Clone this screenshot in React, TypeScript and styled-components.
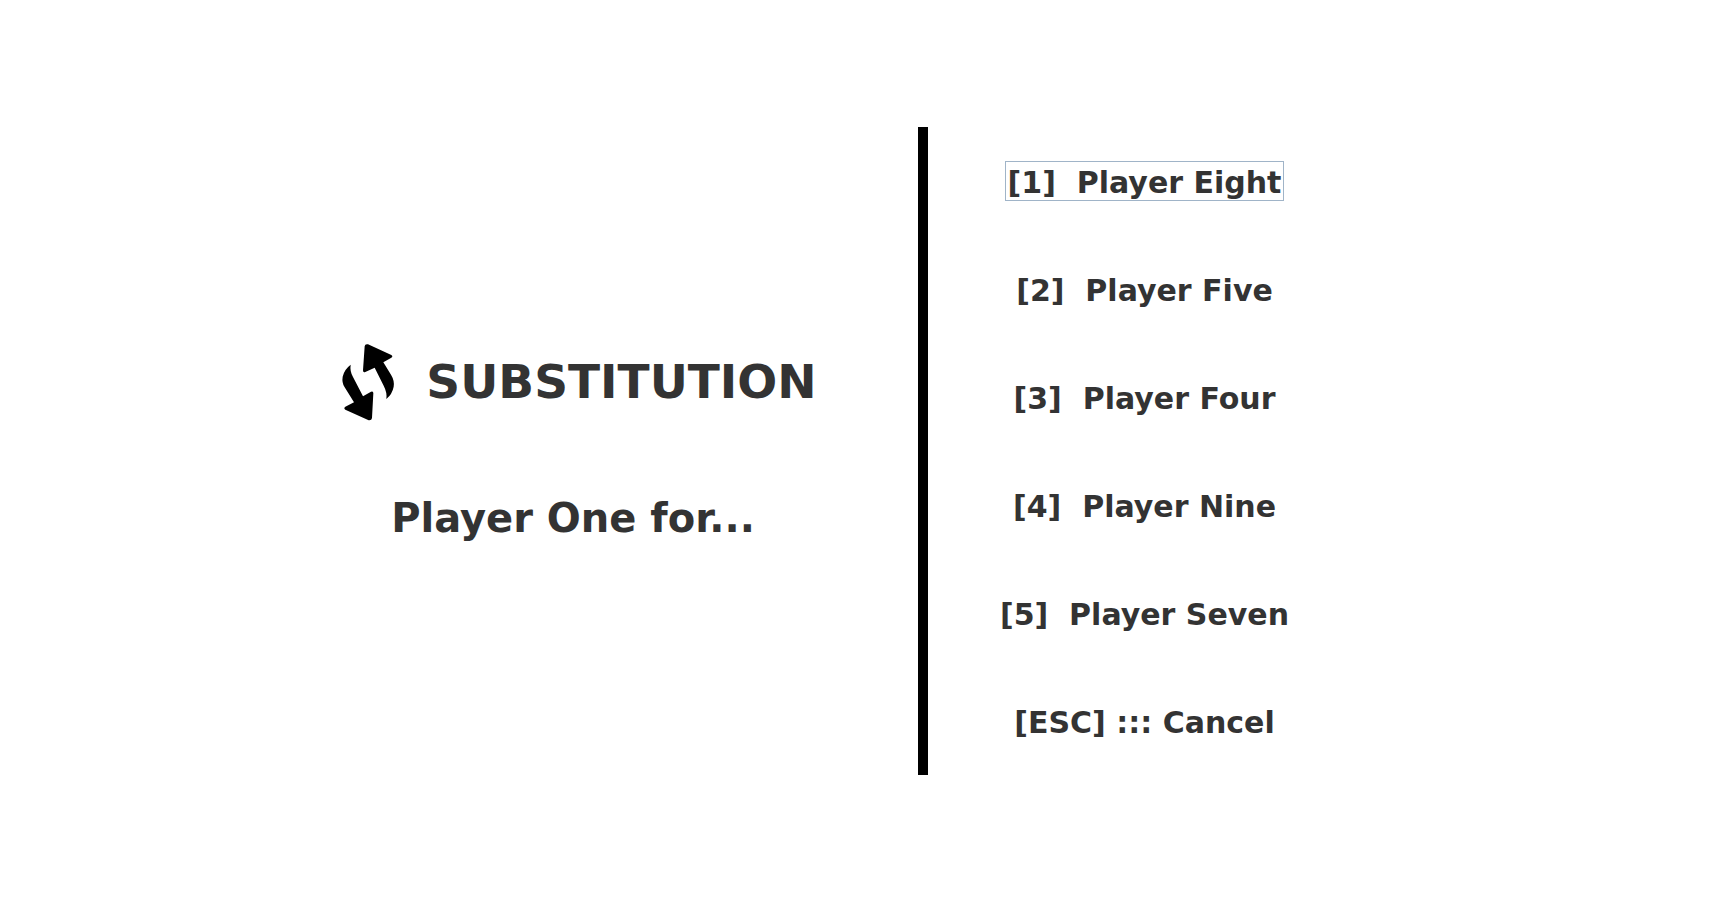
import React from "react";
import styled, { createGlobalStyle } from "styled-components";

const GlobalStyle = createGlobalStyle`
  * { box-sizing: border-box; }
  body {
    margin: 0;
    background: #fff;
    color: #333;
    font-family: Verdana, "DejaVu Sans", sans-serif;
    font-weight: bold;
  }
`;

const Screen = styled.main`
  min-height: 100vh;
  display: grid;
  grid-template-columns: 690fr 10px 433fr;
  align-content: center;
  padding: 0 367px 7px 228px;
`;

const Summary = styled.section`
  display: flex;
  flex-direction: column;
  align-items: center;
  justify-content: center;
  gap: 73px;
  padding-bottom: 18px;
`;

const TitleRow = styled.div`
  display: flex;
  align-items: center;
  gap: 31px;
  padding-left: 12px;
`;

const Title = styled.h1`
  margin: 0;
  font-size: 47px;
  line-height: 56px;
`;

const Subtitle = styled.h2`
  margin: 0;
  font-size: 40px;
  line-height: 48px;
`;

const SwapIcon = styled.svg`
  width: 54px;
  height: 78px;
  flex: none;
`;

const Divider = styled.div`
  background: #000;
`;

const Options = styled.ul`
  list-style: none;
  margin: 0;
  padding: 0;
`;

const OptionRow = styled.li`
  height: 108px;
  display: flex;
  align-items: center;
  justify-content: center;
`;

const Option = styled.button<{ $selected?: boolean }>`
  height: 40px;
  padding: 3px 2px 0;
  border: 1px solid ${(p) => (p.$selected ? "#a0b4c8" : "transparent")};
  background: none;
  color: inherit;
  font: inherit;
  font-size: 30px;
  line-height: 36px;
  white-space: pre;
  cursor: pointer;
`;

const options = [
  "[1]  Player Eight",
  "[2]  Player Five",
  "[3]  Player Four",
  "[4]  Player Nine",
  "[5]  Player Seven",
  "[ESC] ::: Cancel",
];

export default function App() {
  return (
    <>
      <GlobalStyle />
      <Screen>
        <Summary>
          <TitleRow>
            <SwapIcon viewBox="36 38 162 234" aria-hidden="true">
              <path d="M107 48Q108 40 117 42L187 74Q193 78 187 82L163 96L186 133Q197 151 194 169Q190 191 172 206Q175 187 164 166L137 112L109 125Q102 128 102 120Z" />
              <path d="M65 103Q62 122 72 140L102 198L126 184Q133 181 133 189L129 263Q128 271 119 270L49 238Q43 234 49 229L75 216L47 171Q38 157 41 139Q46 117 65 103Z" />
            </SwapIcon>
            <Title>SUBSTITUTION</Title>
          </TitleRow>
          <Subtitle>Player One for...</Subtitle>
        </Summary>
        <Divider />
        <Options>
          {options.map((label, i) => (
            <OptionRow key={label}>
              <Option type="button" $selected={i === 0}>{label}</Option>
            </OptionRow>
          ))}
        </Options>
      </Screen>
    </>
  );
}
